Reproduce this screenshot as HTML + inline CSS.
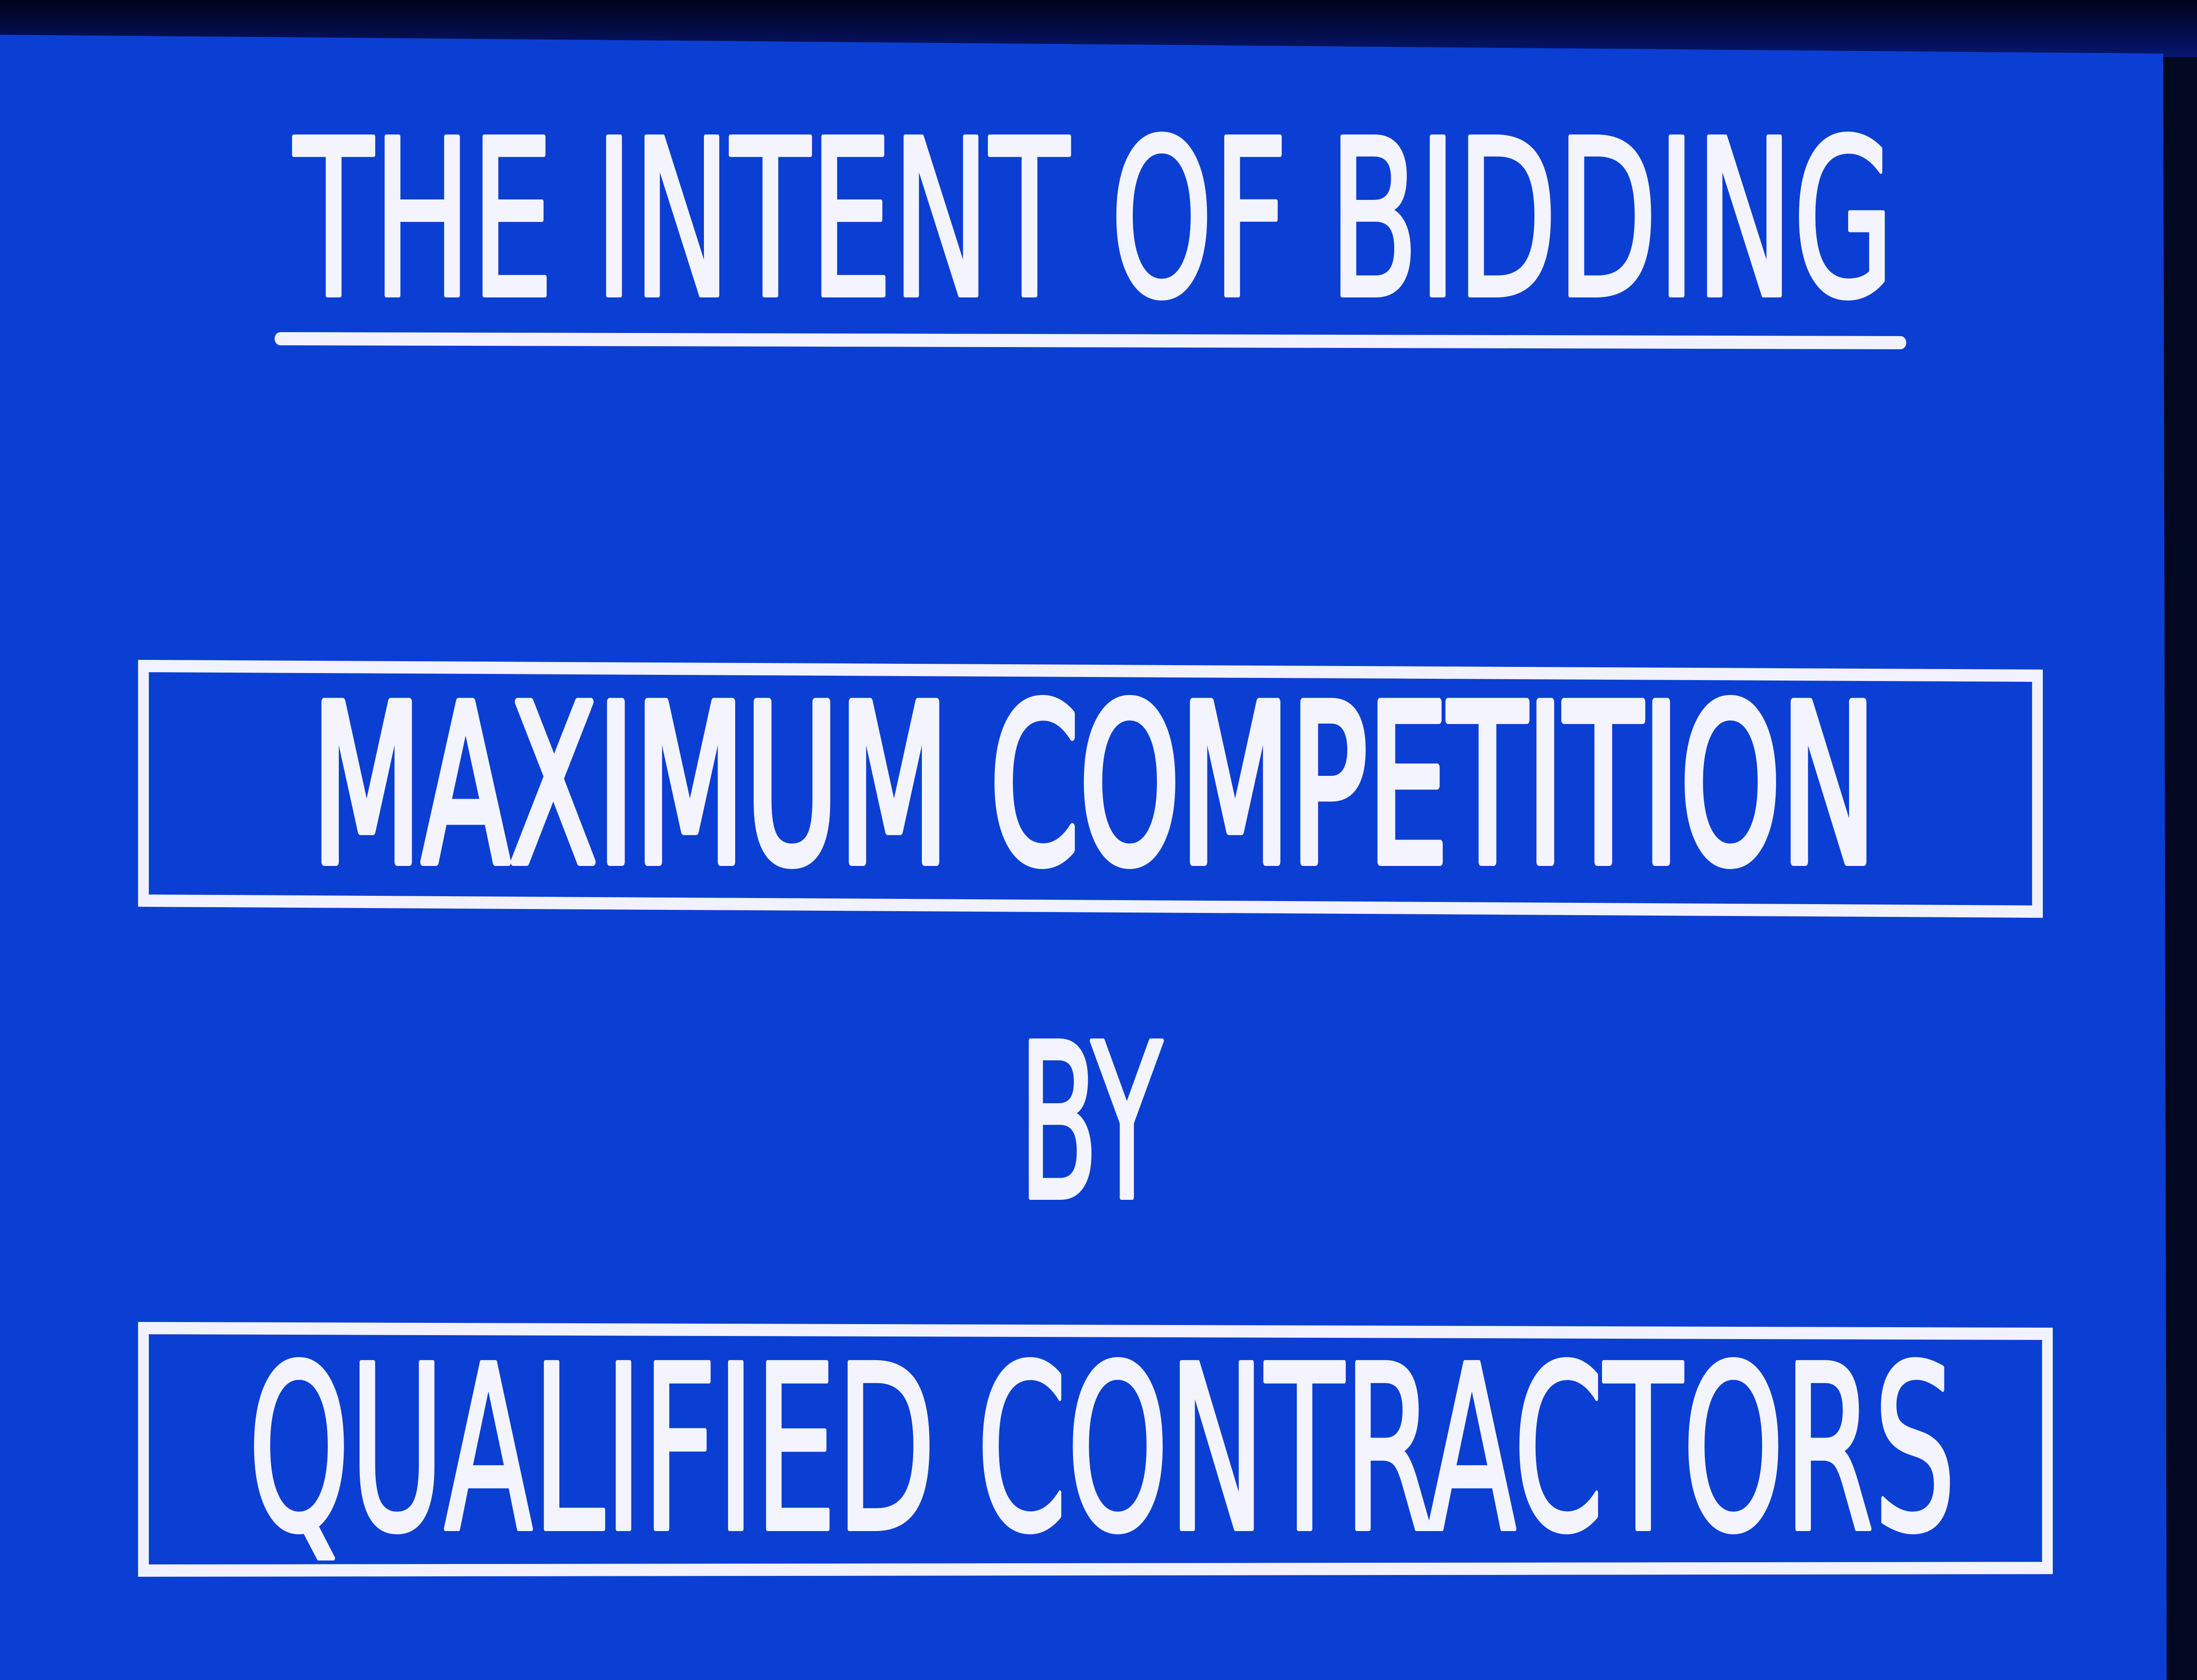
<!DOCTYPE html>
<html><head><meta charset="utf-8"><style>
html,body{margin:0;padding:0;background:#020722;width:100%;height:100%;overflow:hidden;}
svg{display:block;position:absolute;left:0;top:0;width:100vw;height:100vh;}
</style></head><body>
<svg viewBox="0 0 5728 3824" preserveAspectRatio="none" xmlns="http://www.w3.org/2000/svg">
<defs>
<linearGradient id="top" x1="0" y1="0" x2="0" y2="1">
<stop offset="0" stop-color="#01031a"/><stop offset="1" stop-color="#061670"/>
</linearGradient>
</defs>
<rect width="5728" height="3824" fill="#020722"/>
<rect width="5728" height="130" fill="url(#top)"/>
<polygon points="0,79 5640,122 5649,3824 0,3824" fill="#0b3ed2"/>
<g fill="none" stroke="#f2f2ff" stroke-width="28">
<polygon points="374,1516 5312,1538 5312,2075 374,2050"/>
<polygon points="374,3023 5338,3036 5338,3569 374,3575"/>
</g>
<line x1="731" y1="771" x2="4955" y2="780" stroke="#f2f2ff" stroke-width="30" stroke-linecap="round"/>
<g fill="#f4f4ff" stroke="#f4f4ff" stroke-linejoin="round" font-family="'DejaVu Sans Condensed','DejaVu Sans','Liberation Sans',sans-serif">
<text x="766" y="672" font-size="495" stroke-width="10" textLength="4172" lengthAdjust="spacingAndGlyphs">THE INTENT OF BIDDING</text>
<text x="812" y="1962" font-size="500" stroke-width="18" textLength="4080" lengthAdjust="spacingAndGlyphs">MAXIMUM COMPETITION</text>
<text x="2656" y="2726" font-size="490" stroke-width="10" textLength="374" lengthAdjust="spacingAndGlyphs">BY</text>
<text x="647" y="3480" font-size="520" stroke-width="10" textLength="4452" lengthAdjust="spacingAndGlyphs">QUALIFIED CONTRACTORS</text>
</g>
</svg>
</body></html>
